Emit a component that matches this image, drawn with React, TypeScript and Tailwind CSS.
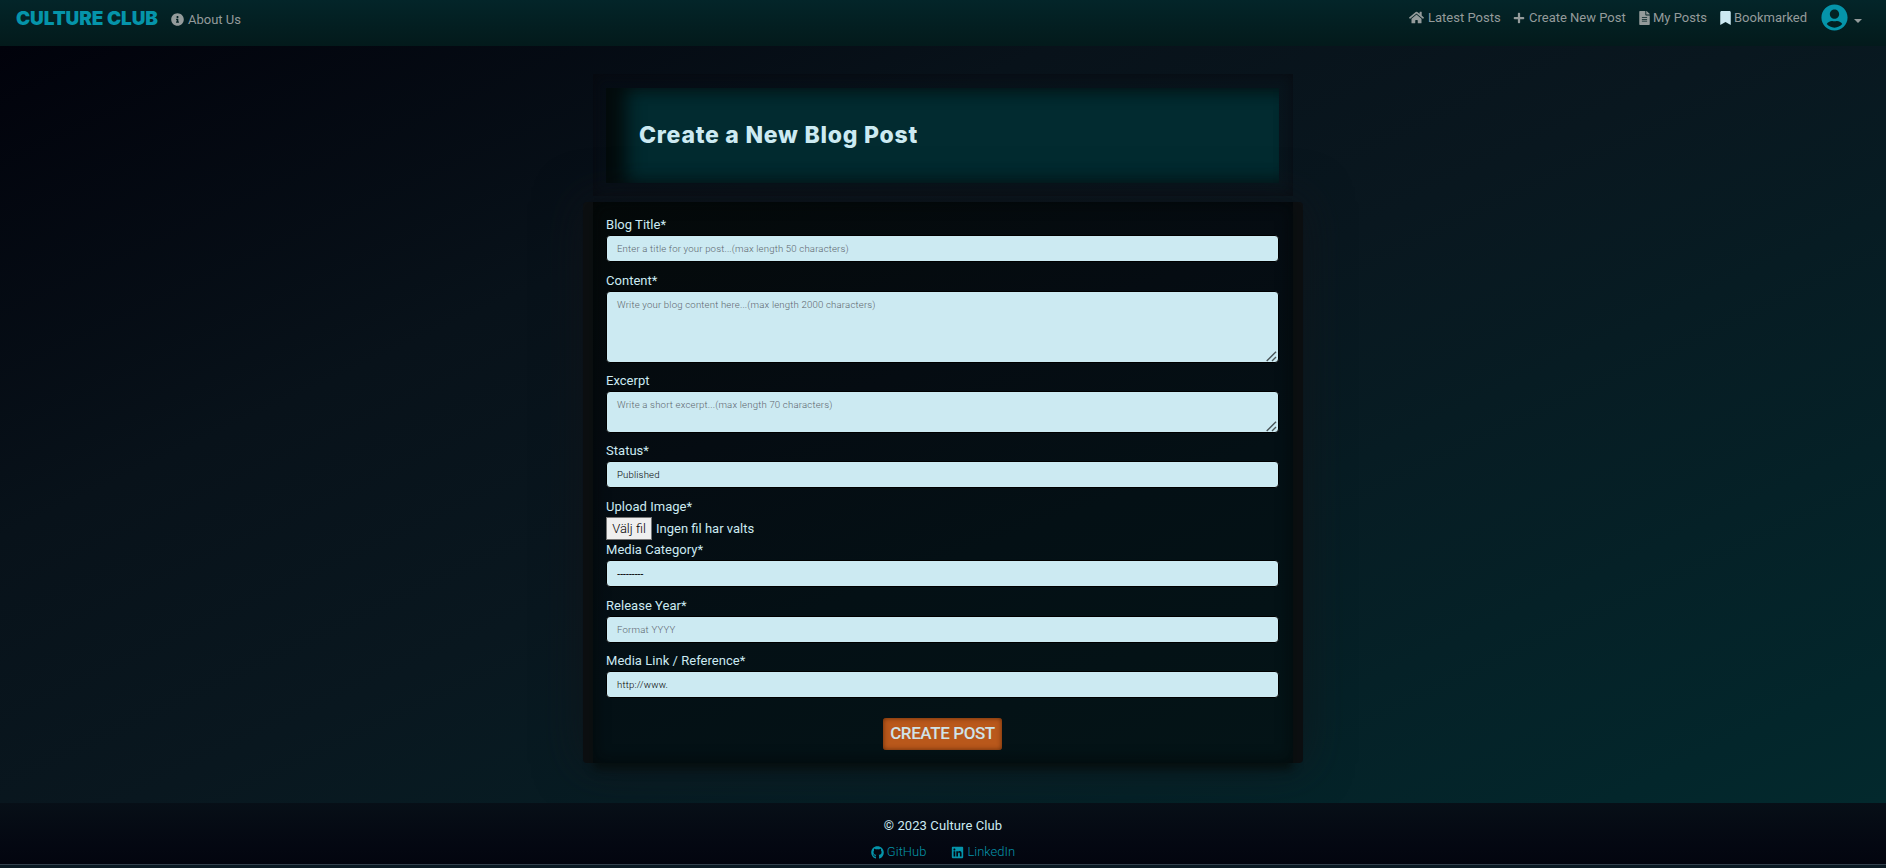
import React from "react";
import { FaInfoCircle, FaHome, FaPlus, FaFileAlt, FaBookmark, FaUserCircle, FaGithub, FaLinkedin } from "react-icons/fa";

const labelClass = "block h-5 text-[13px] leading-5 tracking-[0.03px] text-[#cceaf2]";
const fieldClass =
  "block w-full resize-none rounded-[4px] border border-black bg-[#cceaf2] px-[10px] text-[9.6px] leading-[14px] text-black outline-none placeholder:text-[#5c666e] placeholder:opacity-100";

function Grip() {
  return (
    <svg className="absolute right-[2px] bottom-[1px] h-[11px] w-[11px]" viewBox="0 0 11 11" stroke="#4a5558" strokeWidth="1.4" fill="none">
      <path d="M0.7 10L10 0.7M6 10L10 6" />
    </svg>
  );
}

function Field({ label, children, className }: { label: string; children: React.ReactNode; className: string }) {
  return (
    <div className={className}>
      <label className={labelClass}>{label}</label>
      {children}
    </div>
  );
}

export default function App() {
  return (
    <div className="flex h-[868px] w-full flex-col overflow-hidden bg-[#0b1820] font-['Roboto',sans-serif]">
      <nav className="flex h-[46px] shrink-0 items-start justify-between bg-linear-to-b from-[#032529] to-[#031a1b] pr-[24px] pl-4 text-[13px] text-[#949b9b]">
        <div className="flex h-[39px] items-center">
          <span className="w-[155px] font-['Inter',sans-serif] text-[19px] font-black tracking-[-0.12px] whitespace-nowrap text-[#0594aa]">CULTURE CLUB</span>
          <span className="flex items-center gap-1 whitespace-nowrap">
            <FaInfoCircle className="size-[13px]" />
            About Us
          </span>
        </div>
        <div className="flex h-[35px] items-center whitespace-nowrap">
          <span className="flex w-[104px] items-center gap-[4px]"><FaHome className="size-[15px]" />Latest Posts</span>
          <span className="flex w-[126px] items-center gap-[4px]"><FaPlus className="size-[12px]" />Create New Post</span>
          <span className="flex w-[81px] items-center gap-[3px]"><FaFileAlt className="h-[14px] w-[11px]" />My Posts</span>
          <span className="flex w-[101px] items-center gap-[3px]"><FaBookmark className="h-[14px] w-[11px] text-[#cceaf2]" />Bookmarked</span>
          <FaUserCircle className="size-[27px] text-[#0594aa]" />
          <span className="mt-[6px] ml-[6px] border-x-4 border-t-4 border-x-transparent border-t-[#949b9b]" />
        </div>
      </nav>

      <main className="flex h-[757px] shrink-0 flex-col items-center bg-[linear-gradient(155deg,#01020b_0%,#08121a_30%,#09171f_50%,#03262b_92%,#03292d_100%)] pt-[28px]">
        <header className="h-[122px] w-[700px] px-[13px] pt-[14px] shadow-[inset_0_0_14px_rgba(8,8,14,0.75)]">
          <div className="flex h-[95px] w-[673px] items-center bg-[#022b30] pl-[33px] shadow-[inset_26px_0_18px_-6px_#030b0c,inset_0_16px_14px_-10px_rgba(5,20,22,0.6),inset_0_-14px_14px_-10px_rgba(5,20,22,0.5)]">
            <h1 className="font-['Inter',sans-serif] text-[23px] font-extrabold tracking-[0.75px] whitespace-nowrap text-[#cceaf2]">Create a New Blog Post</h1>
          </div>
        </header>

        <section className="mt-[6px] h-[561px] w-[720px] rounded-[4px] bg-[#0c0f11] px-[10px] shadow-[0_0_45px_2px_rgba(18,20,24,0.65)]">
          <form className="flex h-[561px] flex-col bg-[linear-gradient(160deg,#040909_0%,#050c12_35%,#041015_60%,#041417_100%)] pt-[13px] pr-[14px] pl-[13px] shadow-[0_7px_8px_-1px_rgba(6,14,14,0.9),inset_0_0_16px_rgba(3,6,6,0.7)]">
            <Field label="Blog Title*" className="h-[56px]">
              <input className={`${fieldClass} h-[27px] font-light tracking-[0.16px]`} placeholder="Enter a title for your post...(max length 50 characters)" />
            </Field>
            <Field label="Content*" className="h-[100px]">
              <div className="relative">
                <textarea className={`${fieldClass} h-[72px] pt-[6px] font-light tracking-[0.17px]`} placeholder="Write your blog content here...(max length 2000 characters)" />
                <Grip />
              </div>
            </Field>
            <Field label="Excerpt" className="h-[70px]">
              <div className="relative">
                <textarea className={`${fieldClass} h-[42px] pt-[6px] font-light tracking-[0.17px]`} placeholder="Write a short excerpt...(max length 70 characters)" />
                <Grip />
              </div>
            </Field>
            <Field label="Status*" className="h-[56px]">
              <select className={`${fieldClass} h-[27px] appearance-none font-light tracking-[0.16px]`} defaultValue="p">
                <option value="p">Published</option>
              </select>
            </Field>
            <Field label="Upload Image*" className="h-[43px]">
              <div className="flex h-[23px] items-center gap-1 text-[13px] text-[#cceaf2]">
                <button type="button" className="h-[23px] w-[46px] border border-[#767676] bg-[#efefef] font-light text-black">Välj fil</button>
                <span>Ingen fil har valts</span>
              </div>
            </Field>
            <Field label="Media Category*" className="h-[56px]">
              <select className={`${fieldClass} h-[27px] appearance-none font-medium tracking-[-0.35px]`} defaultValue="n">
                <option value="n">---------</option>
              </select>
            </Field>
            <Field label="Release Year*" className="h-[55px]">
              <input className={`${fieldClass} h-[27px] font-light tracking-[0.2px]`} placeholder="Format YYYY" />
            </Field>
            <Field label="Media Link / Reference*" className="h-[67px]">
              <input className={`${fieldClass} h-[27px] font-light tracking-[0.2px]`} defaultValue="http://www." />
            </Field>
            <button type="button" className="h-[32px] w-[119px] self-center rounded-[3px] bg-[#b9581b] text-[17px] font-medium tracking-[-0.4px] whitespace-nowrap text-[#cfe3e8] shadow-[inset_0_0_5px_rgba(70,25,0,0.75)]">CREATE POST</button>
          </form>
        </section>
      </main>

      <footer className="flex h-[61px] shrink-0 flex-col items-center bg-linear-to-b from-[#070f17] to-[#03050f] pt-[13px] text-[13px] leading-5">
        <p className="tracking-[0.1px] text-[#cceaf2]">© 2023 Culture Club</p>
        <div className="mt-[6px] flex gap-[25px] text-[#0594aa]">
          <span className="flex items-center gap-[3px]"><FaGithub className="size-[13px]" /><span className="font-light">GitHub</span></span>
          <span className="flex items-center gap-[3px]"><FaLinkedin className="size-[13px]" /><span className="font-light">LinkedIn</span></span>
        </div>
      </footer>
      <div className="h-1 shrink-0 border-t border-[#34414d] bg-[#0b1a24]" />
    </div>
  );
}
